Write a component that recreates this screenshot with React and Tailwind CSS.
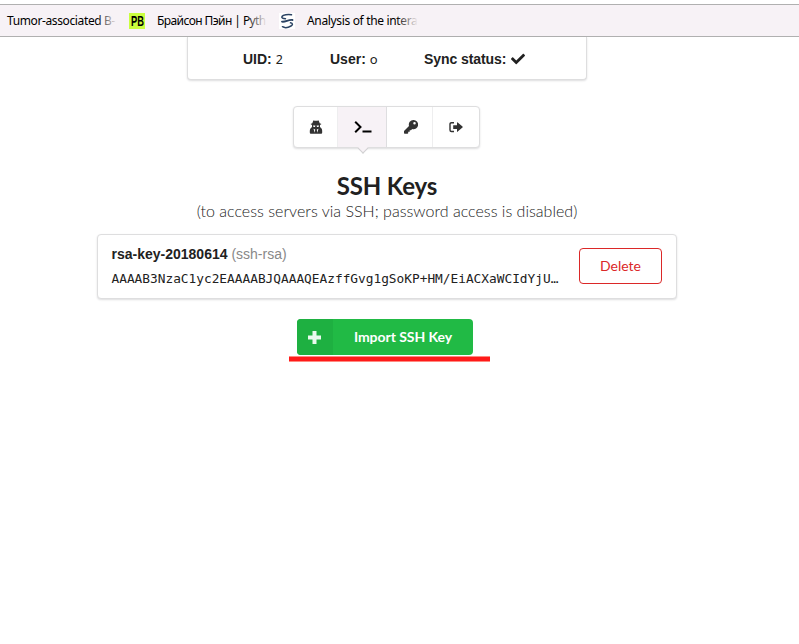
import { FaCheck } from 'react-icons/fa';

function Bookmark({ width, fade, text, className = '' }) {
  return (
    <span className={`relative block whitespace-nowrap ${width} ${className}`}>
      {text}
      <span className={`absolute inset-y-0 right-0 bg-linear-to-r from-[#f7f2f6]/0 to-[#f7f2f6] ${fade}`} />
    </span>
  );
}

function BookmarksBar() {
  return (
    <div className="flex h-[33px] items-center border-y border-[#b0b0b0] bg-[#f7f2f6] pl-[7px] pt-[1px] font-['Noto_Sans',sans-serif] text-[12px] leading-4 text-black">
      <Bookmark width="w-[110px]" fade="w-[20px]" text="Tumor-associated B-" className="tracking-[-0.38px]" />
      <span className="ml-[12px] flex h-4 w-4 items-center justify-center bg-[#caff3f]">
        <span className="inline-block scale-x-[0.62] font-['Liberation_Sans',sans-serif] text-[15px] font-bold leading-4">PB</span>
      </span>
      <Bookmark width="w-[110px]" fade="w-[20px]" text="Брайсон Пэйн | Pyth" className="ml-[12px] tracking-[-0.58px]" />
      <svg className="ml-[12px] h-4 w-4 bg-white" viewBox="0 0 16 16" fill="none" stroke="#2b4363" strokeLinecap="round">
        <path d="M12.500 1.800C9 1 4 1.800 3 3.500C2.300 5 4 5.700 6.500 5.800" strokeWidth="1.500" />
        <path d="M3 8.600C6 9.400 10 6.200 13.500 7" strokeWidth="1.900" />
        <path d="M11.500 9.800C14 10.300 14 12 12 13C9 14.700 5.500 15 3.500 13.700" strokeWidth="1.500" />
      </svg>
      <Bookmark width="w-[111px]" fade="w-[22px]" text="Analysis of the intera" className="ml-[12px] tracking-[-0.34px]" />
    </div>
  );
}

function SpyIcon() {
  return (
    <svg className="h-[14px] w-[14px]" viewBox="0 0 14 14" fill="currentColor">
      <path d="M4.300.5C5 .1 6 .8 7 .8S9 .1 9.700.5L10.700 3.200L12.500 4L11 5V7L12.300 8.300C13.200 9.200 13.200 11 13.200 12.200C13.200 13.200 12.700 13.700 11.800 13.700H2.200C1.300 13.700.8 13.200.8 12.200C.8 11 .8 9.200 1.700 8.300L3 7V5L1.500 4L3.300 3.200Z" />
      <path d="M4 5.600H6.400L6 6.900H4.500ZM7.600 5.600H10L9.500 6.900H8ZM4.500 8.700L6.200 9.600L5.800 12.800ZM9.500 8.700L7.800 9.600L8.200 12.800Z" fill="#fff" />
    </svg>
  );
}

function PromptIcon() {
  return (
    <svg className="h-[14px] w-[18px]" viewBox="0 0 18 14" fill="none" stroke="currentColor" strokeWidth="2">
      <path d="M1.200 1.700L6.500 7L1.200 12.300M8.500 11.500H17.500" />
    </svg>
  );
}

function KeyIcon() {
  return (
    <svg className="h-[14px] w-[14px]" viewBox="0 0 14 14" fill="currentColor">
      <path fillRule="evenodd" d="M9.400 0A4.600 4.600 0 1 1 8.200 9L7 10.200H5.700V11.700H4.200V13.200L3.500 13.800H.7Q0 13.800 0 13.100V11L5 5.900A4.600 4.600 0 0 1 9.400 0ZM10.500 2.100A1.250 1.250 0 1 0 10.500 4.600A1.250 1.250 0 1 0 10.500 2.100Z" />
    </svg>
  );
}

function ExitIcon() {
  return (
    <svg className="h-[14px] w-[14px]" viewBox="0 0 14 14" fill="currentColor">
      <path d="M5 2.700H2.500Q1 2.700 1 4.200V10Q1 11.500 2.500 11.500H5" fill="none" stroke="currentColor" strokeWidth="1.400" />
      <path d="M4.200 5.200H8V2.800Q8 1.900 8.700 2.600L13.500 6.600Q14 7.100 13.500 7.600L8.700 11.600Q8 12.300 8 11.400V9H4.200Z" />
    </svg>
  );
}

const card = 'border border-[#dededf] bg-white shadow-[0_1px_2px_0_rgba(34,36,38,0.15)]';

export default function App() {
  return (
    <div className="flex h-[644px] w-[799px] flex-col overflow-hidden bg-white pt-[4px] font-['Lato',sans-serif] text-[14px] text-[#212121]">
      <BookmarksBar />
      <main className="flex w-[774px] flex-col items-center">
        <section className={`flex h-[43px] w-[400px] items-start rounded-b pl-[55px] pt-[13px] font-['Liberation_Sans',sans-serif] leading-[18px] ${card} border-t-0`}>
          <div className="w-[87px]"><b>UID:</b> <span className="font-['Noto_Sans',sans-serif] text-[12.5px]">2</span></div>
          <div className="w-[94px]"><b>User:</b> <span className="font-['Noto_Sans',sans-serif] text-[13px]">o</span></div>
          <div className="flex items-center whitespace-nowrap"><b className="tracking-[-0.08px]">Sync status:</b><FaCheck className="ml-[5px] h-[14px] w-[14px]" /></div>
        </section>

        <nav className={`mr-[1px] mt-[26px] flex h-[42px] w-[187px] rounded ${card} text-[#333]`}>
          <span className="flex w-[44px] items-center justify-center border-r border-[#eeeeef]"><SpyIcon /></span>
          <span className="relative flex w-[49px] items-center justify-center border-r border-[#dedee0] bg-[#f7f2f6] text-black">
            <span className="ml-[2px]"><PromptIcon /></span>
            <span className="absolute -bottom-[5px] left-[21px] h-[8px] w-[8px] rotate-45 border-b border-r border-[#d0d0d2] bg-[#f7f2f6]" />
          </span>
          <span className="flex w-[46px] items-center justify-center border-r border-[#eeeeef]"><span className="ml-[2px]"><KeyIcon /></span></span>
          <span className="flex w-[46px] items-center justify-center"><ExitIcon /></span>
        </nav>

        <h1 className="mt-[22px] text-[24px] font-bold leading-[31px] tracking-[-0.15px]">SSH Keys</h1>
        <p className="text-[16px] font-light leading-[20px] tracking-[0.02px] text-[#222]">(to access servers via SSH; password access is disabled)</p>

        <section className={`mt-[13px] flex h-[65px] w-[580px] items-center rounded pl-[13.5px] pr-[14px] ${card}`}>
          <div className="w-[467.5px] whitespace-nowrap">
            <div className="font-['Liberation_Sans',sans-serif] leading-[20px]"><b>rsa-key-20180614</b> <span className="text-[#888]">(ssh-rsa)</span></div>
            <div className="mt-[5px] font-['DejaVu_Sans_Mono',monospace] text-[12.8px] leading-[20px]">AAAAB3NzaC1yc2EAAAABJQAAAQEAzffGvg1gSoKP+HM/EiACXaWCIdYjU…</div>
          </div>
          <button className="mb-[2px] h-[36px] w-[83px] rounded border border-[#db2828] text-[14px] text-[#db2828]">Delete</button>
        </section>

        <button className="mr-[4px] mt-[20px] flex h-[36px] w-[176px] overflow-hidden rounded bg-[#21ba45] font-bold text-white">
          <span className="flex h-full w-[36px] items-center justify-center bg-[#1eb041]">
            <svg className="mr-[1px] h-[13px] w-[13px]" viewBox="0 0 13 13" fill="#eafaee"><path d="M4.500 0h4v4.500h4.500v4H8.500V13H4.500V8.500H0V4.500h4.500z" /></svg>
          </span>
          <span className="flex h-full flex-1 items-center justify-center pb-[1px] tracking-[-0.05px]">Import SSH Key</span>
        </button>
        <div className="ml-[4px] mt-[1px] h-[6px] w-[201px] border-y border-[#ff8a80] bg-[#ff1a1a]" />
      </main>
    </div>
  );
}
